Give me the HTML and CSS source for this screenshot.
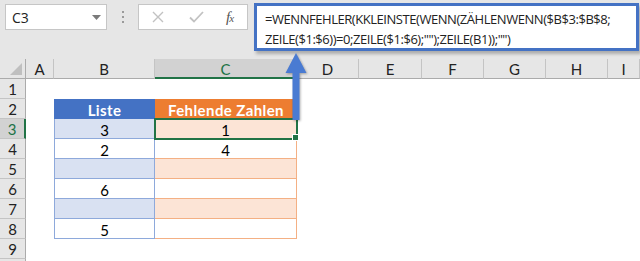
FILE: index.html
```html
<!DOCTYPE html>
<html lang="de">
<head>
<meta charset="utf-8">
<title>WENNFEHLER KKLEINSTE</title>
<link rel="stylesheet" href="styles.css">
</head>
<body>
<div class="app">
  <div class="toolbar">
    <div class="namebox">
      <span class="ref">C3</span>
      <svg class="caret" width="9" height="5" viewBox="0 0 9 5"><path d="M0 0h9L4.5 5z" fill="#7a7a7a"/></svg>
    </div>
    <div class="grip"><i></i><i></i><i></i></div>
    <div class="buttons">
      <svg class="btn-x" width="12" height="12" viewBox="0 0 12 12"><path d="M1 1l10 10M11 1L1 11" stroke="#c2c2c2" stroke-width="1.4" fill="none"/></svg>
      <svg class="btn-ok" width="15" height="12" viewBox="0 0 15 12"><path d="M1 6.5l4 4L14 1" stroke="#c2c2c2" stroke-width="1.8" fill="none"/></svg>
      <span class="fx">f<sub>x</sub></span>
    </div>
    <div class="formula">
      <div>=WENNFEHLER(KKLEINSTE(WENN(ZÄHLENWENN($B$3:$B$8;</div>
      <div>ZEILE($1:$6))=0;ZEILE($1:$6);"");ZEILE(B1));"")</div>
    </div>
  </div>

  <div class="sheet">
    <div class="corner"><svg width="12" height="12" viewBox="0 0 12 12"><path d="M12 0V12H0z" fill="#bfbfbf"/></svg></div>
    <div class="ch">A</div>
    <div class="ch">B</div>
    <div class="ch ch-active">C</div>
    <div class="ch">D</div>
    <div class="ch">E</div>
    <div class="ch">F</div>
    <div class="ch">G</div>
    <div class="ch">H</div>
    <div class="ch">I</div>

    <div class="rh">1</div><div class="c"></div><div class="c"></div><div class="c"></div><div class="c wide"></div>

    <div class="rh">2</div><div class="c"></div><div class="c th th-b">Liste</div><div class="c th th-c">Fehlende Zahlen</div><div class="c wide"></div>

    <div class="rh rh-active">3</div><div class="c"></div><div class="c tb band-b">3</div><div class="c tc band-c sel">1</div><div class="c wide"></div>

    <div class="rh">4</div><div class="c"></div><div class="c tb">2</div><div class="c tc">4</div><div class="c wide"></div>

    <div class="rh">5</div><div class="c"></div><div class="c tb band-b"></div><div class="c tc band-c"></div><div class="c wide"></div>

    <div class="rh">6</div><div class="c"></div><div class="c tb">6</div><div class="c tc"></div><div class="c wide"></div>

    <div class="rh">7</div><div class="c"></div><div class="c tb band-b"></div><div class="c tc band-c"></div><div class="c wide"></div>

    <div class="rh">8</div><div class="c"></div><div class="c tb">5</div><div class="c tc"></div><div class="c wide"></div>

    <div class="rh">9</div><div class="c"></div><div class="c"></div><div class="c"></div><div class="c wide"></div>

    <div class="rh"></div><div class="c"></div><div class="c"></div><div class="c"></div><div class="c wide"></div>
  </div>

  <svg class="arrow" width="26" height="70" viewBox="0 0 26 70">
    <path d="M12 1L1.5 21H8.5V68H15.5V21H22.5z" fill="#4a7bd2"/>
  </svg>
</div>
</body>
</html>
```
FILE: styles.css
```css
* { box-sizing: border-box; }
html, body { margin: 0; padding: 0; }
body {
  width: 640px;
  height: 261px;
  overflow: hidden;
  background: #fff;
  font-family: Lato, "Liberation Sans", sans-serif;
}
.app {
  position: relative;
  width: 640px;
  height: 261px;
  overflow: hidden;
}

/* ---------- toolbar ---------- */
.toolbar {
  height: 59px;
  background: #e6e6e6;
  display: flex;
  align-items: flex-start;
  padding: 4px 0 0 5px;
}
.namebox {
  width: 102px;
  height: 26px;
  background: #fff;
  border: 1px solid #c6c6c6;
  display: flex;
  align-items: center;
  justify-content: space-between;
  padding: 0 5px 0 6px;
  font-family: "Open Sans", "Liberation Sans", sans-serif;
  font-size: 14px;
  color: #222;
}
.caret { margin-top: 1px; }
.grip {
  width: 31px;
  height: 26px;
  display: flex;
  flex-direction: column;
  align-items: center;
  justify-content: center;
  gap: 3px;
}
.grip i {
  display: block;
  width: 2px;
  height: 2px;
  background: #9a9a9a;
}
.buttons {
  width: 110px;
  height: 26px;
  background: #fff;
  border: 1px solid #c6c6c6;
  display: flex;
  align-items: center;
  padding-left: 13px;
}
.btn-x { margin-right: 25px; }
.btn-ok { margin-right: 22px; }
.fx {
  font-family: "Liberation Serif", "DejaVu Serif", serif;
  font-style: italic;
  font-size: 15px;
  color: #555;
  letter-spacing: -1px;
}
.fx sub { font-size: 11px; vertical-align: 0; }
.formula {
  margin-left: 6px;
  width: 385px;
  height: 48px;
  background: #fff;
  border: 3px solid #4472c4;
  box-shadow: 2px 3px 3px rgba(0, 0, 0, 0.25);
  margin-top: -1px;
  padding: 3px 0 0 8px;
  font-family: "Open Sans", "Liberation Sans", sans-serif;
  font-size: 13px;
  letter-spacing: -0.45px;
  line-height: 20px;
  color: #222;
  white-space: nowrap;
  position: relative;
  z-index: 2;
}

/* ---------- sheet ---------- */
.sheet {
  display: grid;
  grid-template-columns: 26px 28px 101px 142px 62px 63px 62px 62px 62px 32px;
  grid-template-rows: repeat(11, 20px);
  font-size: 15px;
  color: #000;
}
.corner {
  background: #e6e6e6;
  border-right: 1px solid #ababab;
  border-bottom: 1px solid #ababab;
  display: flex;
  align-items: flex-end;
  justify-content: flex-end;
  padding: 0 3px 3px 0;
}
.ch {
  background: #e6e6e6;
  border-right: 1px solid #c4c4c4;
  border-bottom: 1px solid #ababab;
  text-align: center;
  line-height: 20px;
  color: #222;
}
.ch-active {
  background: #d2d2d2;
  color: #217346;
  border-bottom: 2px solid #217346;
}
.rh {
  background: #e6e6e6;
  border-right: 1px solid #ababab;
  border-bottom: 1px solid #c4c4c4;
  text-align: center;
  line-height: 20px;
  color: #222;
}
.rh-active {
  background: #d2d2d2;
  color: #217346;
  border-right: 2px solid #217346;
}
.c {
  background: #fff;
  text-align: center;
  line-height: 20px;
  padding-top: 1px;
}
.sheet > .c.wide { grid-column: 5 / 11; }

.th {
  color: #fff;
  font-weight: bold;
  letter-spacing: 0.4px;
}
.th-b { background: #4472c4; }
.th-c { background: #ed7d31; }
.tb {
  border-left: 1px solid #8ea9db;
  border-right: 1px solid #8ea9db;
  border-bottom: 1px solid #8ea9db;
}
.tc {
  border-right: 1px solid #f4b084;
  border-bottom: 1px solid #f4b084;
}
.band-b { background: #d9e1f2; }
.band-c { background: #fce4d6; }
.sel {
  position: relative;
  outline: 2px solid #217346;
  outline-offset: -1px;
}
.sel::after {
  content: "";
  position: absolute;
  right: -3px;
  bottom: -3px;
  width: 5px;
  height: 5px;
  background: #217346;
  border: 1px solid #fff;
}

.arrow {
  position: absolute;
  left: 284px;
  top: 52px;
  z-index: 3;
  filter: drop-shadow(1px 1px 1px rgba(0, 0, 0, 0.3));
}
```
